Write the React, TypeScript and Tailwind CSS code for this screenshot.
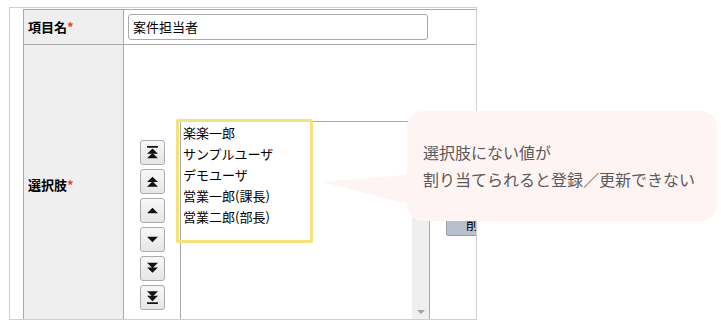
import React from 'react';

const Tri = ({ up, y }: { up: boolean; y: number }) =>
  up ? <polygon points={`5,${y} 10,${y + 5} 0,${y + 5}`} /> : <polygon points={`0,${y} 10,${y} 5,${y + 5}`} />;

const MoveButton = ({ kind }: { kind: string }) => {
  return (
    <button className="w-[25px] h-[25px] flex items-center justify-center rounded-[3px] border border-[#acacac] bg-gradient-to-b from-[#f8f8f8] to-[#e6e6e6]">
      <svg width="11" height="13" viewBox="0 0 10 12" fill="#111">
        {kind === 'top' && (
          <>
            <rect x="0" y="0" width="10" height="1.6" />
            <Tri up y={2.2} />
            <Tri up y={6.4} />
          </>
        )}
        {kind === 'up2' && (
          <>
            <Tri up y={1.5} />
            <Tri up y={5.8} />
          </>
        )}
        {kind === 'up' && <Tri up y={3.5} />}
        {kind === 'down' && <Tri up={false} y={3.5} />}
        {kind === 'down2' && (
          <>
            <Tri up={false} y={0.7} />
            <Tri up={false} y={5} />
          </>
        )}
        {kind === 'bottom' && (
          <>
            <Tri up={false} y={0.2} />
            <Tri up={false} y={4.4} />
            <rect x="0" y="10.4" width="10" height="1.6" />
          </>
        )}
      </svg>
    </button>
  );
};

const options = ['楽楽一郎', 'サンプルユーザ', 'デモユーザ', '営業一郎(課長)', '営業二郎(部長)'];

const App = () => {
  return (
    <div className="relative w-[721px] h-[326px] bg-white overflow-hidden font-['Noto_Sans_CJK_JP','Liberation_Sans',sans-serif] text-black">
      <div className="ml-[9px] mt-[7px] w-[468px] h-[313px] border border-[#d0d0d0] pl-[13px] pt-[1px] overflow-hidden">
        <div className="w-[520px] border-t border-l border-[#a9a9a9]">
          {/* 項目名 */}
          <div className="flex h-[35px] border-b border-[#a9a9a9]">
            <div className="w-[100px] shrink-0 border-r border-[#a9a9a9] bg-[#efefef] pl-[4px] flex items-center text-[13px] font-bold">
              項目名<span className="text-[#d9481c]">*</span>
            </div>
            <div className="flex-1 pl-[4px] flex items-center">
              <div className="w-[300px] h-[26px] rounded-[3px] border border-[#a9a9a9] px-[4px] flex items-center text-[13px]">
                案件担当者
              </div>
            </div>
          </div>

          {/* 選択肢 */}
          <div className="flex h-[280px]">
            <div className="w-[100px] shrink-0 border-r border-[#a9a9a9] bg-[#efefef] pl-[4px] flex items-center text-[13px] font-bold">
              選択肢<span className="text-[#d9481c]">*</span>
            </div>
            <div className="flex-1 pl-[16px] pt-[76px] flex items-start">
              <div className="mt-[19px] flex flex-col gap-[4px]">
                {['top', 'up2', 'up', 'down', 'down2', 'bottom'].map((k) => (
                  <MoveButton key={k} kind={k} />
                ))}
              </div>
              <div className="ml-[15px] w-[250px] h-[200px] border border-[#a9a9a9] flex">
                <div className="flex-1 pl-[2px] text-[13px] leading-[21px]">
                  {options.map((o) => (
                    <div key={o}>{o}</div>
                  ))}
                </div>
                <div className="w-[17px] bg-[#efefef] flex flex-col justify-end items-center pb-[6px]">
                  <svg width="8" height="4" viewBox="0 0 8 4" fill="#a3a3a3">
                    <polygon points="0,0 8,0 4,4" />
                  </svg>
                </div>
              </div>
              <div className="ml-[16px] mt-[91px]">
                <button className="w-[66px] h-[24px] rounded-[2px] border border-[#9aa0ab] bg-[#b8bfcd] text-[13px] flex items-center justify-center">
                  削除
                </button>
              </div>
            </div>
          </div>
        </div>
      </div>

      {/* highlight */}
      <div className="absolute left-[176px] top-[119px] w-[137px] h-[124px] border-[3px] border-[#f6e27a] rounded-[2px]" />

      {/* balloon */}
      <svg className="absolute left-[320px] top-[170px]" width="96" height="40" viewBox="0 0 96 40">
        <polygon points="2,12 96,4 96,36" fill="#fff4f4" />
      </svg>
      <div className="absolute left-[407px] top-[111px] w-[310px] h-[110px] rounded-[16px] bg-[#fff4f4] pl-[16px] flex flex-col justify-center text-[16px] leading-[27px] text-[#5a5a5a]">
        <div>選択肢にない値が</div>
        <div>割り当てられると登録／更新できない</div>
      </div>
    </div>
  );
};

export default App;
